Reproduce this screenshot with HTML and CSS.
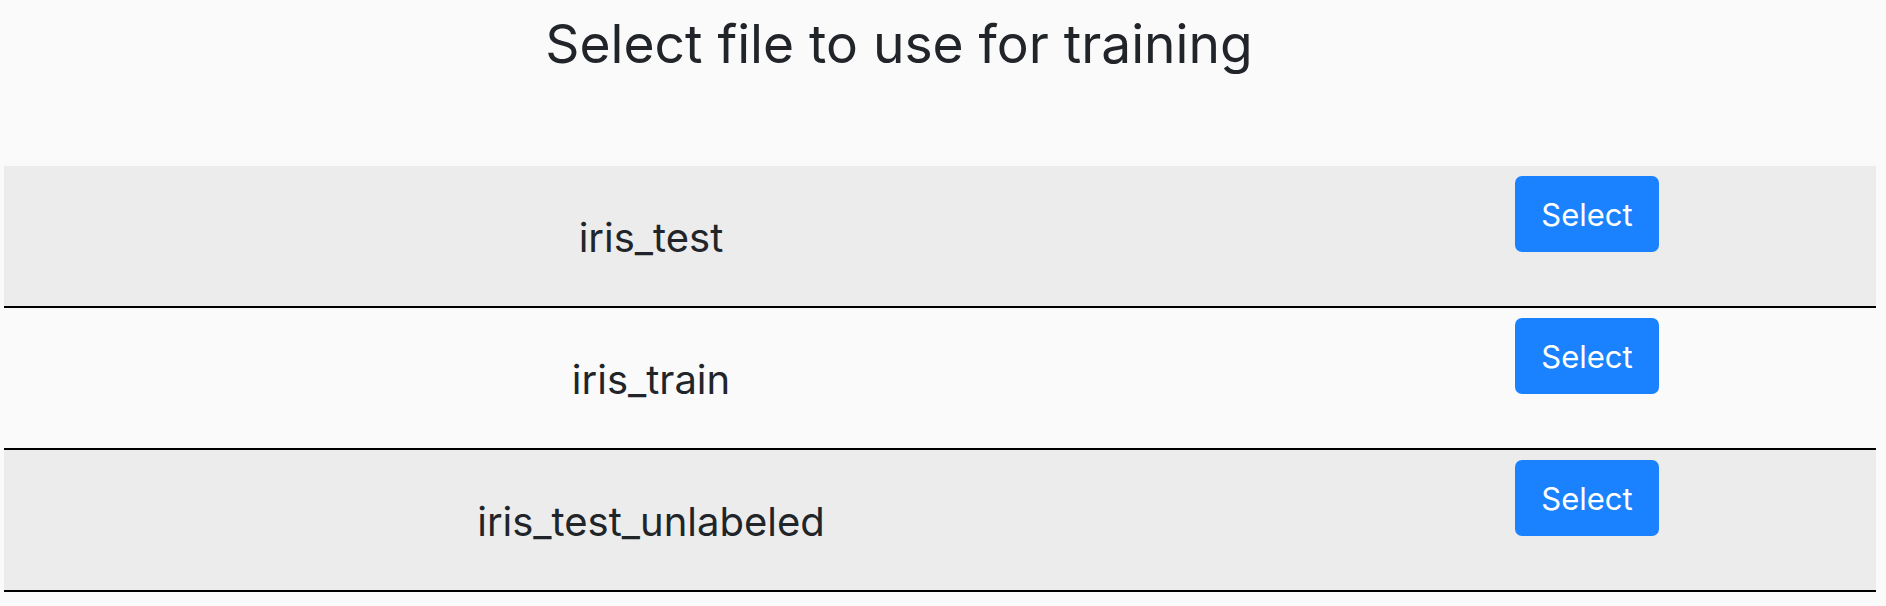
FILE: index.html
```html
<!DOCTYPE html>
<html>
<head>
<meta charset="utf-8">
<link rel="stylesheet" href="styles.css">
</head>
<body>
<div class="page">
  <h1 class="title">Select file to use for training</h1>
  <div class="file-list">
    <div class="file-row shaded">
      <div class="file-name">iris_test</div>
      <div class="file-action"><button class="select-btn">Select</button></div>
    </div>
    <div class="file-row">
      <div class="file-name">iris_train</div>
      <div class="file-action"><button class="select-btn">Select</button></div>
    </div>
    <div class="file-row shaded">
      <div class="file-name">iris_test_unlabeled</div>
      <div class="file-action"><button class="select-btn">Select</button></div>
    </div>
  </div>
</div>
</body>
</html>
```
FILE: styles.css
```css
html, body {
  margin: 0;
  padding: 0;
  background: #fafafa;
}
body {
  font-family: Inter, "Noto Sans", sans-serif;
  color: #212529;
}
.page {
  padding: 0 10px 0 4px;
}
.title {
  margin: 0;
  padding: 12px 82px 0 0;
  box-sizing: border-box;
  font-size: 53.3px;
  font-weight: 400;
  line-height: 1.2;
  text-align: center;
  height: 166px;
}
.file-row {
  display: grid;
  grid-template-columns: 1294fr 578fr;
  height: 142px;
  box-sizing: border-box;
  border-bottom: 2px solid #000;
}
.file-row.shaded {
  background: #ececec;
}
.file-name {
  align-self: center;
  text-align: center;
  font-size: 40px;
  line-height: 1.2;
  padding-top: 4px;
}
.file-action {
  display: flex;
  justify-content: center;
  align-items: flex-start;
  padding-top: 10px;
}
.select-btn {
  width: 144px;
  height: 76px;
  border: none;
  border-radius: 7px;
  background: #1a82ff;
  color: #fff;
  font-family: Inter, "Noto Sans", sans-serif;
  font-size: 31px;
  padding: 0;
}
```
